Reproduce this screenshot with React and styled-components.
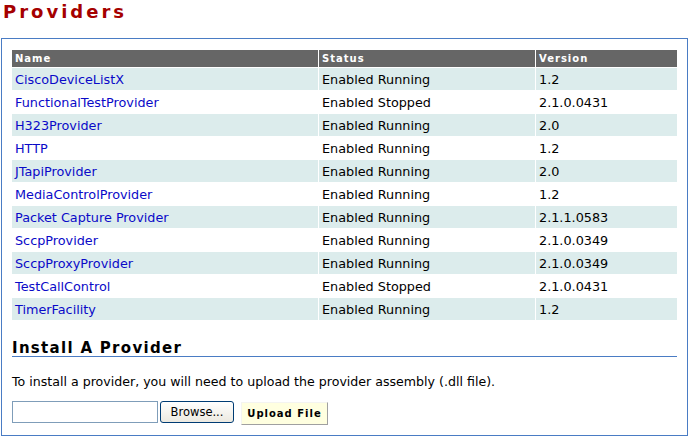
import React from "react";
import styled, { createGlobalStyle } from "styled-components";

const Global = createGlobalStyle`
  html, body { margin: 0; padding: 0; background: #ffffff; }
  body { font-family: "DejaVu Sans", Verdana, sans-serif; }
`;

const Page = styled.div`
  padding: 0 4px 0 1px;
`;

const Title = styled.h1`
  margin: 0 0 0 2px;
  height: 38px;
  font-family: "DejaVu Sans", Verdana, sans-serif;
  font-size: 18px;
  font-weight: bold;
  letter-spacing: 3px;
  line-height: 24px;
  color: #a50000;
`;

const Panel = styled.div`
  width: 665px;
  border: 1px solid #4a7cc4;
  padding: 10px 10px 10px 10px;
`;

const Table = styled.table`
  width: 667px;
  margin-left: -1px;
  border-collapse: separate;
  border-spacing: 1px;
  font-size: 12.8px;
`;

const Th = styled.th`
  background: #666666;
  color: #ffffff;
  text-align: left;
  font-size: 10px;
  font-weight: bold;
  letter-spacing: 1px;
  height: 17px;
  padding: 0 0 0 3px;
  width: ${(p) => p.$w}px;
`;

const Row = styled.tr`
  background: ${(p) => (p.$alt ? "#dcecec" : "#ffffff")};
`;

const Td = styled.td`
  height: 21px;
  padding: 1px 0 0 3px;
  color: #000000;
`;

const Link = styled.a`
  color: #0a0ac8;
  text-decoration: none;
`;

const Section = styled.h2`
  margin: 19px 0 0 0;
  padding: 0;
  border-bottom: 1px solid #4a7cc4;
  font-size: 15px;
  font-weight: bold;
  letter-spacing: 1.3px;
  line-height: 16px;
  color: #000000;
`;

const Para = styled.p`
  margin: 17px 0 0 0;
  font-size: 12.6px;
  line-height: 15px;
  color: #000000;
`;

const UploadRow = styled.div`
  display: flex;
  align-items: flex-start;
  margin-top: 12px;
`;

const FileInput = styled.div`
  width: 144px;
  height: 20px;
  border: 1px solid #7f9db9;
  background: #fff;
`;

const Browse = styled.button`
  margin-left: 2px;
  width: 74px;
  height: 22px;
  border: 1px solid #003c74;
  border-radius: 3px;
  background: linear-gradient(#ffffff, #ece9e0);
  font-family: "DejaVu Sans", Tahoma, sans-serif;
  font-size: 11.5px;
  color: #000;
  padding: 0;
`;

const Upload = styled.button`
  margin-left: 7px;
  margin-top: 1px;
  width: 87px;
  height: 23px;
  border: 1px solid;
  border-color: #f4f4f0 #a0a0a0 #a0a0a0 #f4f4f0;
  background: #ffffe0;
  font-family: "DejaVu Sans", Verdana, sans-serif;
  font-size: 10px;
  font-weight: bold;
  letter-spacing: 1px;
  color: #000;
  padding: 0;
`;

const rows = [
  ["CiscoDeviceListX", "Enabled Running", "1.2"],
  ["FunctionalTestProvider", "Enabled Stopped", "2.1.0.0431"],
  ["H323Provider", "Enabled Running", "2.0"],
  ["HTTP", "Enabled Running", "1.2"],
  ["JTapiProvider", "Enabled Running", "2.0"],
  ["MediaControlProvider", "Enabled Running", "1.2"],
  ["Packet Capture Provider", "Enabled Running", "2.1.1.0583"],
  ["SccpProvider", "Enabled Running", "2.1.0.0349"],
  ["SccpProxyProvider", "Enabled Running", "2.1.0.0349"],
  ["TestCallControl", "Enabled Stopped", "2.1.0.0431"],
  ["TimerFacility", "Enabled Running", "1.2"],
];

export default function App() {
  return (
    <Page>
      <Global />
      <Title>Providers</Title>
      <Panel>
        <Table>
          <thead>
            <tr>
              <Th $w={303}>Name</Th>
              <Th $w={213}>Status</Th>
              <Th $w={138}>Version</Th>
            </tr>
          </thead>
          <tbody>
            {rows.map((r, i) => (
              <Row key={r[0]} $alt={i % 2 === 0}>
                <Td><Link href="#">{r[0]}</Link></Td>
                <Td>{r[1]}</Td>
                <Td>{r[2]}</Td>
              </Row>
            ))}
          </tbody>
        </Table>
        <Section>Install A Provider</Section>
        <Para>To install a provider, you will need to upload the provider assembly (.dll file).</Para>
        <UploadRow>
          <FileInput />
          <Browse>Browse...</Browse>
          <Upload>Upload File</Upload>
        </UploadRow>
      </Panel>
    </Page>
  );
}
